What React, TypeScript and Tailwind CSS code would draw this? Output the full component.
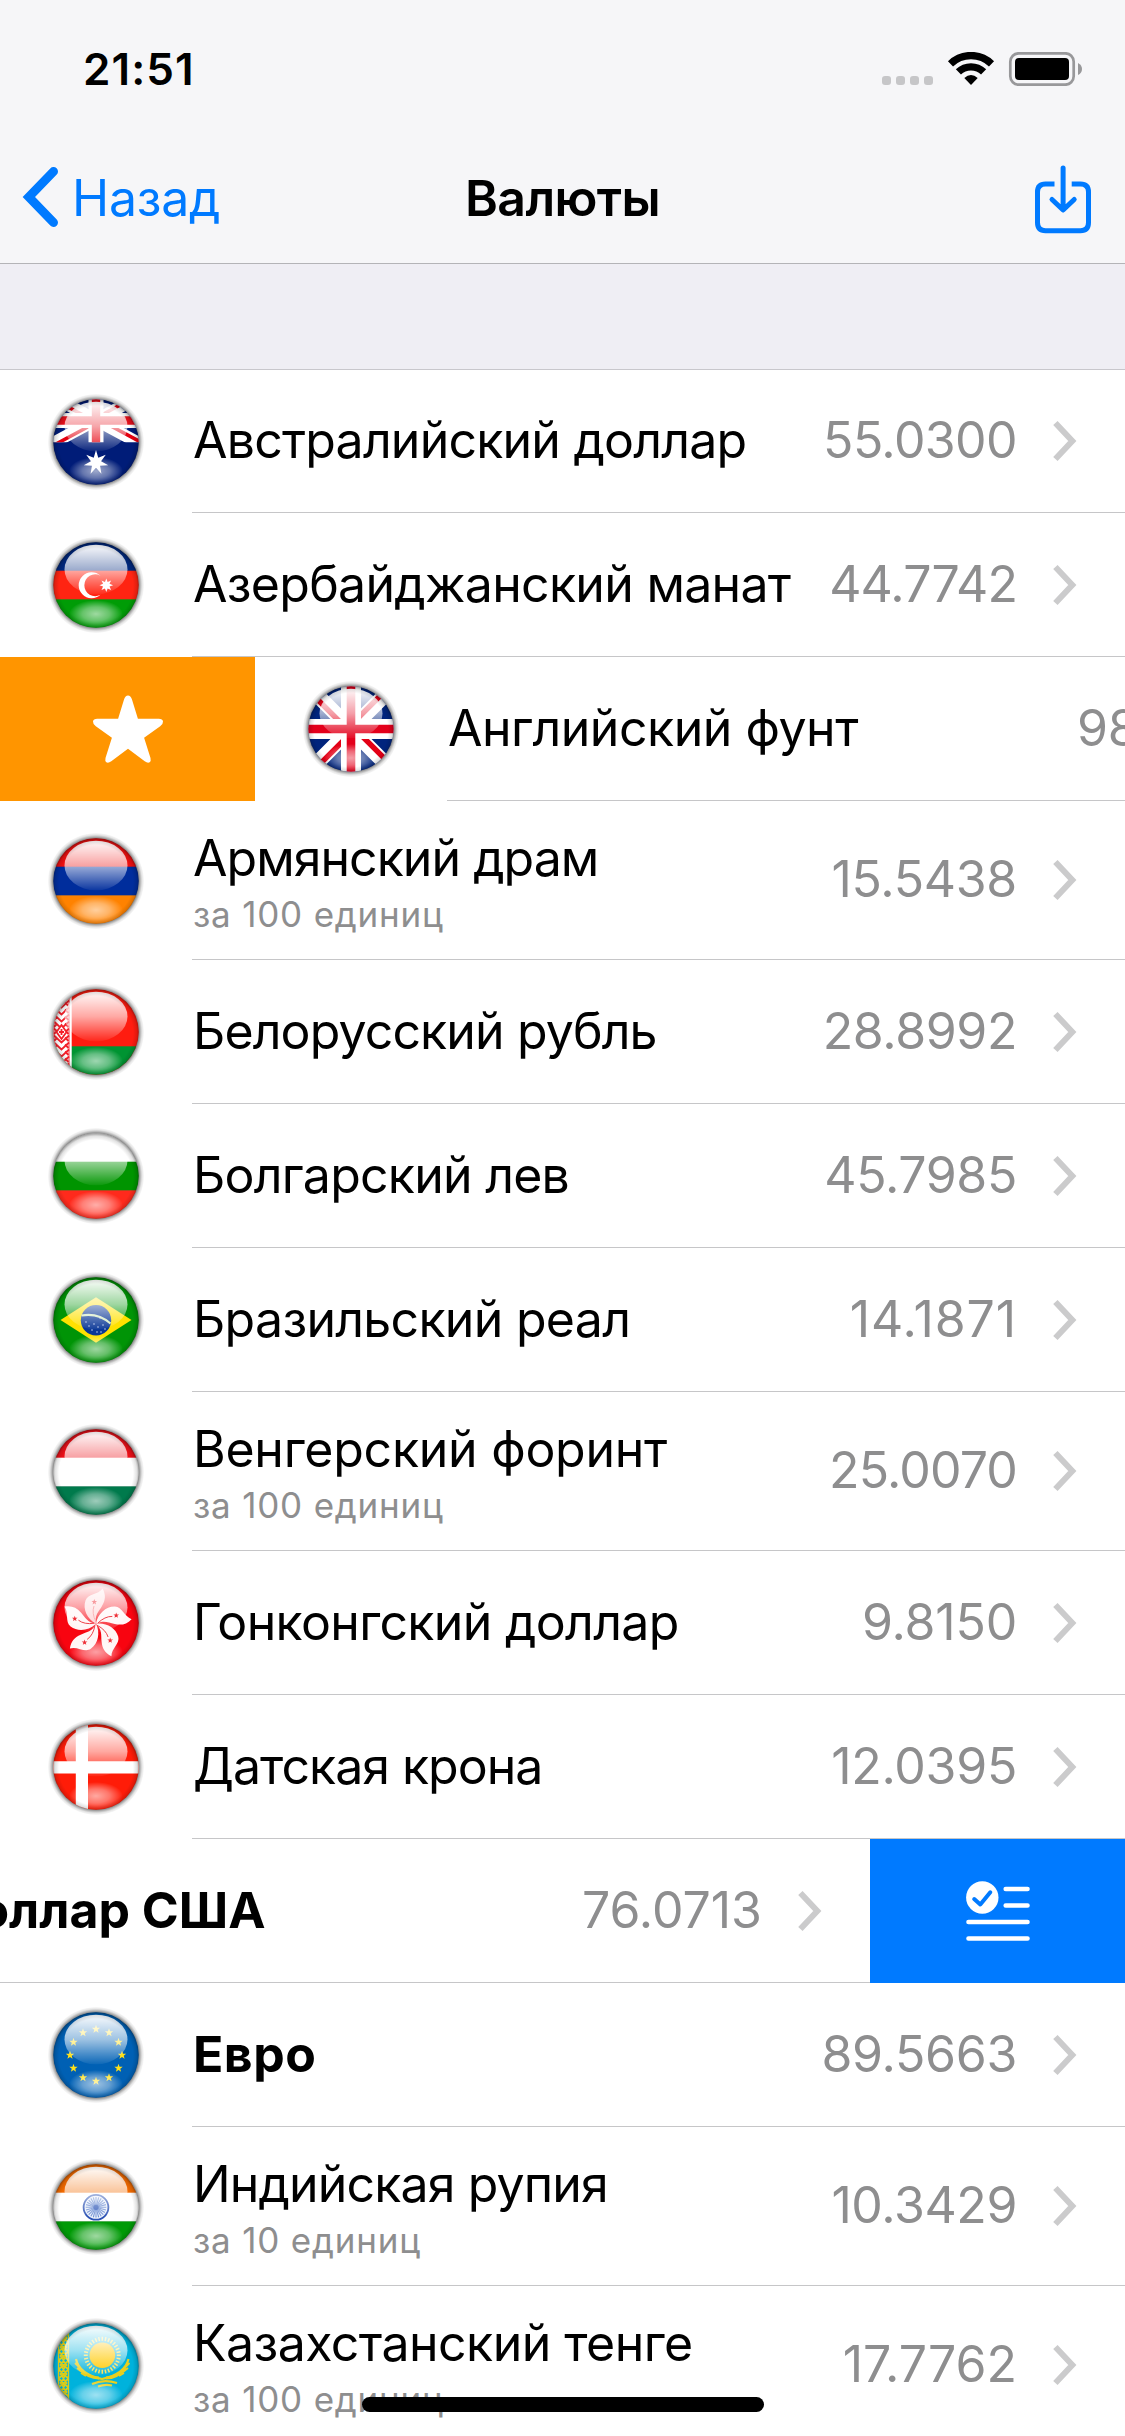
import React from 'react';

type Row = {
  flag?: React.ReactNode;
  name: string;
  nameClass: string;
  note?: string;
  noteClass?: string;
  value: string;
  valueClass: string;
};

/* ---------- flag helpers ---------- */

function starPoints(cx: number, cy: number, outer: number, inner: number, tips: number) {
  const out: string[] = [];
  for (let i = 0; i < tips * 2; i++) {
    const r = i % 2 === 0 ? outer : inner;
    const a = (Math.PI * i) / tips - Math.PI / 2;
    out.push(`${(cx + r * Math.cos(a)).toFixed(2)},${(cy + r * Math.sin(a)).toFixed(2)}`);
  }
  return out.join(' ');
}

function Bands({ top, middle, bottom }: { top: string; middle: string; bottom: string }) {
  return (
    <>
      <rect width="96" height="34" fill={top} />
      <rect y="33.7" width="96" height="29" fill={middle} />
      <rect y="62.4" width="96" height="34" fill={bottom} />
    </>
  );
}

function SharedDefs() {
  return (
    <svg className="absolute h-0 w-0" aria-hidden="true">
      <defs>
        <radialGradient id="shadow" gradientUnits="userSpaceOnUse" cx="48" cy="48" r="48.5">
          <stop offset="0.86" stopColor="#000" stopOpacity="0.6" />
          <stop offset="0.91" stopColor="#000" stopOpacity="0.3" />
          <stop offset="0.95" stopColor="#000" stopOpacity="0.1" />
          <stop offset="1" stopColor="#000" stopOpacity="0" />
        </radialGradient>
        <radialGradient id="rim" gradientUnits="userSpaceOnUse" cx="48" cy="49" r="44">
          <stop offset="0.84" stopColor="#000" stopOpacity="0" />
          <stop offset="0.93" stopColor="#000" stopOpacity="0.12" />
          <stop offset="1" stopColor="#000" stopOpacity="0.42" />
        </radialGradient>
        <linearGradient id="gloss" x1="0" y1="0" x2="0" y2="1">
          <stop offset="0" stopColor="#fff" stopOpacity="0.98" />
          <stop offset="0.5" stopColor="#fff" stopOpacity="0.62" />
          <stop offset="1" stopColor="#fff" stopOpacity="0.05" />
        </linearGradient>
        <radialGradient id="glow">
          <stop offset="0" stopColor="#fff" stopOpacity="0.62" />
          <stop offset="0.5" stopColor="#fff" stopOpacity="0.4" />
          <stop offset="1" stopColor="#fff" stopOpacity="0" />
        </radialGradient>
        <clipPath id="ball">
          <circle cx="48" cy="48" r="42.7" />
        </clipPath>
        <clipPath id="canton">
          <rect width="96" height="48.3" />
        </clipPath>
      </defs>
    </svg>
  );
}

function Ball({ children }: { children: React.ReactNode }) {
  return (
    <svg className="h-24 w-24 shrink-0" viewBox="0 0 96 96">
      <circle cx="48" cy="48" r="48" fill="url(#shadow)" />
      <g clipPath="url(#ball)">
        {children}
        <ellipse cx="48" cy="77" rx="27" ry="14" fill="url(#glow)" />
        <ellipse cx="48" cy="32.5" rx="31.5" ry="24.8" fill="url(#gloss)" />
        <circle cx="48" cy="48" r="43" fill="url(#rim)" />
      </g>
    </svg>
  );
}

const Australia = (
  <Ball>
    <rect width="96" height="96" fill="#001c78" />
    <g clipPath="url(#canton)">
      <path d="M-4 -2 100 54M100 -2 -4 54" stroke="#fff" strokeWidth="12" />
      <path d="M48 28.5 -4 56.5M-4 0 48 28M100 -4 48 24M48 24 100 52" stroke="#e3000f" strokeWidth="3.6" />
      <path d="M48 0V49M0 26.500H96" stroke="#fff" strokeWidth="15" />
      <path d="M48 0V49M0 26.500H96" stroke="#e8101c" strokeWidth="8.400" />
    </g>
    <polygon points={starPoints(48, 68.5, 12.5, 5.2, 7)} fill="#fff" />
  </Ball>
);

const Azerbaijan = (
  <Ball>
    <Bands top="#00287e" middle="#ff2412" bottom="#009c06" />
    <path d="M52.500 38.700A13 13 0 1 0 52.500 57.800A10.900 10.900 0 1 1 52.500 38.700Z" fill="#fff" />
    <polygon points={starPoints(58.3, 48.2, 6.8, 3.5, 8)} fill="#fff" />
  </Ball>
);

const Britain = (
  <Ball>
    <rect width="96" height="96" fill="#00247d" />
    <path d="M6 6 90 90M90 6 6 90" stroke="#fff" strokeWidth="15" />
    <path d="M6 10 48 52M6 94 48 52M90 2 48 44M90 86 48 44" stroke="#e30016" strokeWidth="5.400" />
    <path d="M48 0V96M0 48H96" stroke="#fff" strokeWidth="20" />
    <path d="M48 0V96M0 48H96" stroke="#e3001b" strokeWidth="8.600" />
  </Ball>
);

const Armenia = (
  <Ball>
    <Bands top="#ef1010" middle="#002d9c" bottom="#ff8200" />
  </Ball>
);

const Belarus = (
  <Ball>
    <rect width="96" height="96" fill="#ff1c10" />
    <rect y="62.300" width="96" height="34" fill="#009432" />
    <rect width="23.700" height="96" fill="#fff" />
    <g stroke="#f3202a" fill="none" strokeWidth="1.800">
      {[13, 20, 27, 34, 41, 48, 55, 62, 69, 76, 83].map((y) => (
        <path key={y} d={`M6 ${y - 3.5}l7.500 7 7.500-7M6 ${y + 2}l3.500-3.500M20.500 ${y + 2}l-3.500-3.500`} />
      ))}
      <path d="M13.500 41 18.500 48 13.500 55 8.500 48Z" fill="#fff" />
      <path d="M13.500 45v6M11 48h5" />
      <path d="M6 14V82M21 10V86" strokeWidth="0.900" />
    </g>
  </Ball>
);

const Bulgaria = (
  <Ball>
    <Bands top="#fff" middle="#009400" bottom="#ff2a1c" />
  </Ball>
);

const Brazil = (
  <Ball>
    <rect width="96" height="96" fill="#009406" />
    <path d="M48 25.300 83.500 48 48 70.700 12.500 48Z" fill="#ffe100" />
    <circle cx="48" cy="48.300" r="15.200" fill="#0a3796" />
    <path d="M33.500 43.500Q50 40.500 62.500 51.500" stroke="#d6ecc4" strokeWidth="2.200" fill="none" />
    {[
      [38, 50], [41, 54], [46, 52], [44, 58], [50, 55], [53, 60], [57, 57], [49, 60], [52, 46], [55, 53],
    ].map(([x, y]) => (
      <circle key={`${x}-${y}`} cx={x} cy={y} r="0.700" fill="#dfe9ff" />
    ))}
  </Ball>
);

const Hungary = (
  <Ball>
    <Bands top="#ec1018" middle="#fff" bottom="#007a4c" />
  </Ball>
);

const petal = 'M48 48.800C39 44 34.500 34 37.500 25.500C40 18.500 50 20 54.600 13.500C58 20 57.500 25 54 31C50.500 37 46.500 40 48 48.800Z';

const HongKong = (
  <div className="relative h-24 w-24 shrink-0">
    <Ball>
      <rect width="96" height="96" fill="#f80410" />
    </Ball>
    <svg className="absolute inset-0 h-24 w-24" viewBox="0 0 96 96">
      {[0, 72, 144, 216, 288].map((a) => (
        <g key={a} transform={`rotate(${a} 48 48.800)`}>
          <path d={petal} fill="#fff" fillOpacity={a === 0 ? 0.8 : 0.96} />
          <polygon points={starPoints(46.3, 27, 3, 1.2, 5)} fill={a === 0 ? '#f79a9e' : '#ee3038'} />
          <path d="M48 47Q43.500 38 46 31" stroke={a === 0 ? '#f9b0b3' : '#ee4048'} strokeWidth="0.900" fill="none" />
        </g>
      ))}
    </svg>
  </div>
);

const Denmark = (
  <Ball>
    <rect width="96" height="96" fill="#ff1c08" />
    <path d="M33.900 0V96M0 48.300H96" stroke="#fff" strokeWidth="12.200" />
  </Ball>
);

const Europe = (
  <Ball>
    <rect width="96" height="96" fill="#0060b4" />
    {Array.from({ length: 12 }, (_, i) => {
      const a = (i * Math.PI) / 6;
      return (
        <polygon
          key={i}
          points={starPoints(48 + 26 * Math.cos(a), 48.2 + 26 * Math.sin(a), 4.4, 1.8, 5)}
          fill="#ffe01a"
        />
      );
    })}
  </Ball>
);

const India = (
  <Ball>
    <Bands top="#f26a00" middle="#fff" bottom="#009a06" />
    <circle cx="48" cy="48.300" r="12.400" fill="#eaf0fb" stroke="#2c52b4" strokeWidth="1.800" />
    {Array.from({ length: 24 }, (_, i) => (
      <path key={i} d="M48 48.300V38" stroke="#6f8fd2" strokeWidth="1.100" transform={`rotate(${i * 15} 48 48.300)`} />
    ))}
    <circle cx="48" cy="48.300" r="2.600" fill="#3c62bc" />
  </Ball>
);

const Kazakhstan = (
  <div className="relative h-24 w-24 shrink-0">
    <Ball>
      <rect width="96" height="96" fill="#00b2dc" />
      <g stroke="#d9cc1c" fill="none" strokeWidth="1.700">
        <path d="M10.500 14V84M20.500 10V86" strokeWidth="1.300" />
        {[20, 29, 38, 47, 56, 65, 74].map((y) => (
          <path key={y} d={`M10.500 ${y - 4.5}L20.500 ${y + 4.5}M20.500 ${y - 4.5}L10.500 ${y + 4.5}M15.500 ${y - 4}l3 4-3 4-3-4Z`} />
        ))}
      </g>
      {Array.from({ length: 32 }, (_, i) => (
        <path key={i} d="M54.300 22.800V18.800" stroke="#ffe14a" strokeWidth="1.500" transform={`rotate(${i * 11.25} 54.300 37.300)`} />
      ))}
      <g fill="none" stroke="#e8cf1e">
        <path d="M28 41Q31 56 54 61Q77 56 80.500 41" strokeWidth="2.200" />
        <path d="M31 50Q40 60 51 60M77.500 50Q69 60 58 60" strokeWidth="3.200" />
        <path d="M27 45l5 5M29 50l5 4M33 55l5 3M81.500 45l-5 5M80 50l-5 4M76 55l-5 3" strokeWidth="1.800" />
        <path d="M44 66Q56 61 69 65M50 68.500Q57 66 64 67.500" strokeWidth="2.200" />
      </g>
    </Ball>
    <svg className="absolute inset-0 h-24 w-24" viewBox="0 0 96 96">
      <linearGradient id="sun" x1="0" y1="0" x2="0" y2="1">
        <stop offset="0" stopColor="#fff0bc" />
        <stop offset="1" stopColor="#ffd22a" />
      </linearGradient>
      <circle cx="54.300" cy="37.300" r="12.800" fill="url(#sun)" />
    </svg>
  </div>
);

/* ---------- list content ---------- */

const noteTracking = 'tracking-[0.8px]';

const before: Row[] = [
  { flag: Australia, name: 'Австралийский доллар', nameClass: 'tracking-[-0.78px]', value: '55.0300', valueClass: 'tracking-[-0.6px]' },
  { flag: Azerbaijan, name: 'Азербайджанский манат', nameClass: 'tracking-[-0.7px]', value: '44.7742', valueClass: 'tracking-[-0.9px]' },
];

const middle: Row[] = [
  { flag: Armenia, name: 'Армянский драм', nameClass: 'tracking-[-0.96px]', note: 'за 100 единиц', noteClass: noteTracking, value: '15.5438', valueClass: 'tracking-[-0.3px]' },
  { flag: Belarus, name: 'Белорусский рубль', nameClass: 'tracking-[-0.87px]', value: '28.8992', valueClass: 'tracking-[-0.4px]' },
  { flag: Bulgaria, name: 'Болгарский лев', nameClass: 'tracking-[-0.75px]', value: '45.7985', valueClass: 'tracking-[-0.35px]' },
  { flag: Brazil, name: 'Бразильский реал', nameClass: 'tracking-[-0.7px]', value: '14.1871', valueClass: 'tracking-[0.9px]' },
  { flag: Hungary, name: 'Венгерский форинт', nameClass: 'tracking-[-0.26px]', note: 'за 100 единиц', noteClass: noteTracking, value: '25.0070', valueClass: 'tracking-[-0.85px]' },
  { flag: HongKong, name: 'Гонконгский доллар', nameClass: 'tracking-[-0.66px]', value: '9.8150', valueClass: 'tracking-[-0.2px]' },
  { flag: Denmark, name: 'Датская крона', nameClass: 'tracking-[-1px]', value: '12.0395', valueClass: 'tracking-[-0.3px]' },
];

const after: Row[] = [
  { flag: Europe, name: 'Евро', nameClass: 'font-bold tracking-[0.5px]', value: '89.5663', valueClass: 'tracking-[-0.3px]' },
  { flag: India, name: 'Индийская рупия', nameClass: 'tracking-[-0.85px]', note: 'за 10 единиц', noteClass: noteTracking, value: '10.3429', valueClass: 'tracking-[-0.4px]' },
  { flag: Kazakhstan, name: 'Казахстанский тенге', nameClass: 'tracking-[-0.56px]', note: 'за 100 единиц', noteClass: noteTracking, value: '17.7762', valueClass: 'tracking-normal' },
];

const pound: Row = { flag: Britain, name: 'Английский фунт', nameClass: 'tracking-[-0.47px]', value: '98', valueClass: 'w-[195px] tracking-[-0.3px]' };
const dollar: Row = { name: 'Доллар США', nameClass: '-ml-[3px] font-bold', value: '76.0713', valueClass: 'tracking-normal' };

function CurrencyRow({ row, first }: { row: Row; first?: boolean }) {
  const height = row.note ? 'h-[159px]' : first ? 'h-[143px]' : 'h-[144px]';
  return (
    <div className={`flex w-[1125px] shrink-0 bg-white ${height}`}>
      <div className="flex w-48 shrink-0 items-center justify-center">{row.flag}</div>
      <div className="flex flex-1 items-center border-b border-[#c6c6c8] pl-px pr-[48px]">
        <div className={row.note ? 'flex flex-1 flex-col gap-[5px] pt-[3px]' : 'flex flex-1 flex-col pb-[2px]'}>
          <div className={`whitespace-nowrap text-[50px] leading-[60px] text-black ${row.nameClass}`}>{row.name}</div>
          {row.note && (
            <div className={`whitespace-nowrap text-[35px] leading-[42px] text-[#8e8e8f] ${row.noteClass}`}>{row.note}</div>
          )}
        </div>
        <div className={`pb-[2px] text-[50px] leading-[60px] text-[#8e8e8f] ${row.valueClass}`}>{row.value}</div>
        <svg className="ml-[35px] h-[44px] w-[25px]" viewBox="0 0 25 44">
          <path d="M3.400 4 20.300 22 3.400 40" fill="none" stroke="#cbcbcc" strokeWidth="6" />
        </svg>
      </div>
    </div>
  );
}

function StatusIcons() {
  return (
    <svg className="h-[34px] w-[201px]" viewBox="882 52 201 34">
      {[882, 896, 910, 924].map((x) => (
        <rect key={x} x={x} y="76" width="9" height="9" rx="3" fill="#c6c6c8" />
      ))}
      <g fill="none" stroke="#000">
        <path d="M950.500 63.800A29.500 29.500 0 0 1 991.500 63.800" strokeWidth="7.300" />
        <path d="M958.400 71.900A18.200 18.200 0 0 1 983.600 71.900" strokeWidth="7.400" />
      </g>
      <path d="M971 85 964.300 78Q971 71.800 977.700 78Z" fill="#000" />
      <rect x="1010.300" y="53.300" width="63.400" height="31.400" rx="8.500" fill="none" stroke="#98989a" strokeWidth="2.700" />
      <rect x="1015" y="58" width="54" height="22" rx="4" fill="#000" />
      <path d="M1078 63Q1082 65 1082 69T1078 75Z" fill="#98989a" />
    </svg>
  );
}

export default function App() {
  return (
    <div className="relative flex h-[2436px] w-[1125px] flex-col overflow-hidden bg-white font-['Inter',sans-serif]">
      <SharedDefs />

      <header className="h-[264px] shrink-0 border-b border-[#b4b4b7] bg-[#f6f6f8]">
        <div className="flex h-[132px] items-start justify-between pl-[83px] pr-[42px]">
          <div className="pt-[43px] text-[44px] font-semibold leading-[52px] tracking-[1.1px] text-black">21:51</div>
          <div className="pt-[52px]">
            <StatusIcons />
          </div>
        </div>
        <nav className="grid h-[131px] grid-cols-3 items-center">
          <div className="flex items-center pl-[21px]">
            <svg className="h-[62px] w-[40px]" viewBox="22 166.500 40 62">
              <path d="M54.500 171 29.900 196.500 54.500 222" fill="none" stroke="#007aff" strokeWidth="9" strokeLinecap="round" />
            </svg>
            <span className="ml-[11px] text-[50px] leading-[60px] tracking-[-0.25px] text-[#007aff]">Назад</span>
          </div>
          <h1 className="text-center text-[50px] font-semibold leading-[60px] tracking-[-0.6px] text-black">Валюты</h1>
          <div className="flex justify-end pr-[31px]">
            <svg className="h-[72px] w-[62px]" viewBox="1031.500 161.500 62 72">
              <g fill="none" stroke="#007aff" strokeWidth="5">
                <path d="M1054 183.500H1045Q1037 183.500 1037 191.500V222Q1037 230.200 1045 230.200H1080Q1088 230.200 1088 222V191.500Q1088 183.500 1080 183.500H1071.200" />
                <path d="M1062.600 167.500V209M1051.500 199 1062.600 209.500 1073.700 199" strokeLinecap="round" strokeLinejoin="round" />
              </g>
            </svg>
          </div>
        </nav>
      </header>

      <div className="h-[106px] shrink-0 border-b border-[#c8c7cc] bg-[#efeef4]" />

      <main className="flex shrink-0 flex-col">
        {before.map((row, i) => (
          <CurrencyRow key={row.name} row={row} first={i === 0} />
        ))}

        <div className="flex h-[144px] overflow-hidden">
          <div className="flex w-[255px] shrink-0 items-center justify-center bg-[#ff9500]">
            <svg className="h-[72px] w-[72px]" viewBox="91.300 693.500 72 72">
              <path
                fill="#fff"
                d="M127.300 696Q130 696 131.200 699.800L137.200 719.300H158Q162 719.500 162.300 722Q162.500 724.500 159.500 726.800L143.400 738.300 149.800 758.500Q150.500 761.500 149 762.800Q147 764 144 761.800L127.300 749.300 110.600 761.800Q107.600 764 105.600 762.800Q104.100 761.500 104.800 758.500L111.200 738.300 95.100 726.800Q92.100 724.500 92.300 722Q92.600 719.500 96.600 719.300H117.400L123.400 699.800Q124.600 696 127.300 696Z"
              />
            </svg>
          </div>
          <CurrencyRow row={pound} />
        </div>

        {middle.map((row) => (
          <CurrencyRow key={row.name} row={row} />
        ))}

        <div className="flex h-[144px] justify-end overflow-hidden">
          <CurrencyRow row={dollar} />
          <div className="flex w-[255px] shrink-0 items-center justify-center bg-[#007aff]">
            <svg className="h-[60px] w-[64px]" viewBox="965.500 1881.500 64 60">
              <circle cx="981.800" cy="1898" r="16.200" fill="#fff" />
              <path d="M973.700 1899.500 979.800 1905 989.800 1892.800" fill="none" stroke="#007aff" strokeWidth="4" strokeLinecap="round" strokeLinejoin="round" />
              <path d="M1005.200 1889.500H1027M1005.200 1906H1027M968 1922.500H1027M968 1939H1027" stroke="#fff" strokeWidth="4.600" strokeLinecap="round" />
            </svg>
          </div>
        </div>

        {after.map((row) => (
          <CurrencyRow key={row.name} row={row} />
        ))}
      </main>

      <div className="absolute bottom-6 left-[362px] h-[15px] w-[402px] rounded-full bg-black" />
    </div>
  );
}
